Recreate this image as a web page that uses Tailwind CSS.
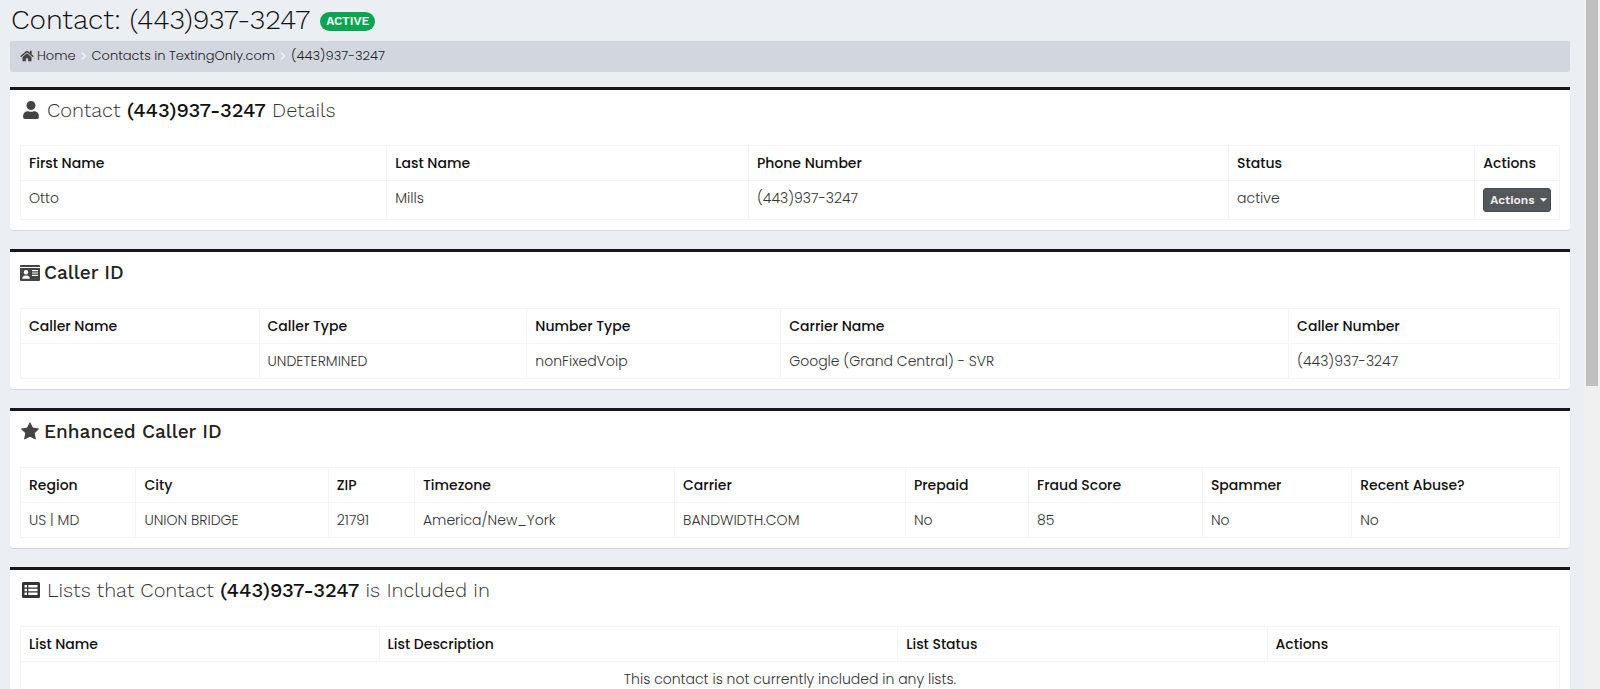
<!DOCTYPE html>
<html lang="en">
<head>
<meta charset="utf-8">
<title>Contact: (443)937-3247</title>
<script src="https://cdn.jsdelivr.net/npm/@tailwindcss/browser@4"></script>
</head>
<body class="flex h-screen overflow-hidden bg-[#ebeef3] font-['Poppins','Inter',sans-serif] text-sm leading-5 text-[#333]">
<main class="min-w-0 flex-1 pl-[10px] pr-[14px]">
  <header class="flex h-[41px] items-center gap-[10px]">
    <h1 class="pb-[2px] pl-px font-['Work_Sans','Inter',sans-serif] text-[28px] leading-8 font-light text-[#111]">Contact: (443)937-3247</h1>
    <span class="mt-[2px] rounded-full bg-[#0aa552] px-[6px] font-['Work_Sans','Inter',sans-serif] text-xs leading-[19px] font-semibold text-white">ACTIVE</span>
  </header>
  <nav aria-label="Breadcrumb" class="mb-[15px] rounded-[2px] bg-[#d2d6df] px-[10px] pt-1 pb-[6px] text-[13px] leading-[21px] font-light text-[#222]">
    <ol class="flex items-center gap-[5px]">
      <li><a href="#" class="flex items-center gap-[3px]"><svg class="h-3 w-[14px]" viewBox="0 0 576 512" fill="#444" aria-hidden="true"><path d="M280 148 96 300v164a16 16 0 0 0 16 16h112a16 16 0 0 0 16-16v-96a16 16 0 0 1 16-16h64a16 16 0 0 1 16 16v96a16 16 0 0 0 16 16h112a16 16 0 0 0 16-16V300L296 148a12 12 0 0 0-16 0zM572 251l-84-69V44a12 12 0 0 0-12-12h-56a12 12 0 0 0-12 12v73l-90-74a48 48 0 0 0-61 0L4 251a12 12 0 0 0-1 17l25 31a12 12 0 0 0 17 2l235-194a12 12 0 0 1 16 0l235 194a12 12 0 0 0 17-2l26-31a12 12 0 0 0-2-17z"/></svg>Home</a></li>
      <li aria-hidden="true"><svg class="h-2 w-[6px]" viewBox="0 0 6 8" fill="none" stroke="#f4f5f8" stroke-width="1.3"><path d="M1 .8 4.5 4 1 7.2"/></svg></li>
      <li><a href="#">Contacts in TextingOnly.com</a></li>
      <li aria-hidden="true"><svg class="h-2 w-[6px]" viewBox="0 0 6 8" fill="none" stroke="#f4f5f8" stroke-width="1.3"><path d="M1 .8 4.5 4 1 7.2"/></svg></li>
      <li>(443)937-3247</li>
    </ol>
  </nav>

  <section class="mb-[19px] rounded-b-[3px] border-t-3 border-[#15191e] bg-white px-[10px] pb-[10px] shadow-[0_1px_1px_rgba(0,0,0,0.1)]">
    <h2 class="flex h-[55px] items-start gap-2 pt-2 font-['Work_Sans','Inter',sans-serif] text-xl leading-6 font-light">
      <svg class="mt-[3px] ml-[3px] h-[18px] w-4" viewBox="0 0 448 512" fill="#444" aria-hidden="true"><path d="M224 256a128 128 0 1 0 0-256 128 128 0 0 0 0 256zm90 32h-17a174 174 0 0 1-146 0h-17A134 134 0 0 0 0 422v42a48 48 0 0 0 48 48h352a48 48 0 0 0 48-48v-42a134 134 0 0 0-134-134z"/></svg>
      <span>Contact <strong class="font-medium text-[#111]">(443)937-3247</strong> Details</span>
    </h2>
    <table class="w-full table-fixed border-collapse text-left [&_td]:border [&_td]:border-[#f4f4f4] [&_td]:px-2 [&_td]:py-[7px] [&_td]:align-top [&_td]:font-light [&_th]:border [&_th]:border-[#f4f4f4] [&_th]:px-2 [&_th]:py-[7px] [&_th]:font-medium [&_th]:text-[#111]">
      <colgroup><col class="w-[23.8%]"><col class="w-[23.5%]"><col class="w-[31.2%]"><col class="w-[16%]"><col></colgroup>
      <thead><tr><th>First Name</th><th>Last Name</th><th>Phone Number</th><th>Status</th><th>Actions</th></tr></thead>
      <tbody><tr><td>Otto</td><td>Mills</td><td>(443)937-3247</td><td>active</td>
        <td><button type="button" class="flex h-6 w-full items-center justify-between rounded-[3px] border border-[#3f4a54] bg-[#54585b] pl-[6px] pr-[3px] font-['Work_Sans','Inter',sans-serif] text-xs font-semibold text-[#eee]">Actions<svg class="h-1 w-[7px]" viewBox="0 0 8 4" fill="#fff" aria-hidden="true"><path d="M0 0h8L4 4z"/></svg></button></td></tr></tbody>
    </table>
  </section>

  <section class="mb-[19px] rounded-b-[3px] border-t-3 border-[#15191e] bg-white px-[10px] pb-[10px] shadow-[0_1px_1px_rgba(0,0,0,0.1)]">
    <h2 class="flex h-14 items-start gap-1 pt-2 font-['Work_Sans','Inter',sans-serif] text-[19px] leading-[26px] font-medium text-[#222]">
      <svg class="mt-[5px] h-4 w-5" viewBox="0 0 20 16" aria-hidden="true"><path d="M1 0h18a1 1 0 0 1 1 1v1H0V1a1 1 0 0 1 1-1zM0 3h20v12a1 1 0 0 1-1 1H1a1 1 0 0 1-1-1z" fill="#444"/><circle cx="6" cy="7.2" r="2.2" fill="#fff"/><path d="M2.2 13.8c0-2 1.3-3.3 3-3.3h1.6c1.7 0 3 1.3 3 3.3zM12 5h6v1.2h-6zM12 7.4h6v1.2h-6zM12 9.8h6V11h-6z" fill="#fff"/></svg>
      Caller ID
    </h2>
    <table class="w-full table-fixed border-collapse text-left [&_td]:border [&_td]:border-[#f4f4f4] [&_td]:px-2 [&_td]:py-[7px] [&_td]:font-light [&_th]:border [&_th]:border-[#f4f4f4] [&_th]:px-2 [&_th]:py-[7px] [&_th]:font-medium [&_th]:text-[#111]">
      <colgroup><col class="w-[15.5%]"><col class="w-[17.4%]"><col class="w-[16.5%]"><col class="w-[33%]"><col></colgroup>
      <thead><tr><th>Caller Name</th><th>Caller Type</th><th>Number Type</th><th>Carrier Name</th><th>Caller Number</th></tr></thead>
      <tbody><tr><td></td><td>UNDETERMINED</td><td>nonFixedVoip</td><td>Google (Grand Central) - SVR</td><td>(443)937-3247</td></tr></tbody>
    </table>
  </section>

  <section class="mb-[19px] rounded-b-[3px] border-t-3 border-[#15191e] bg-white px-[10px] pb-[10px] shadow-[0_1px_1px_rgba(0,0,0,0.1)]">
    <h2 class="flex h-14 items-start gap-1 pt-2 font-['Work_Sans','Inter',sans-serif] text-[19px] leading-[26px] font-medium text-[#222]">
      <svg class="mt-[3px] h-[18px] w-5" viewBox="0 0 20 18" fill="#444" stroke="#444" stroke-linejoin="round" aria-hidden="true"><path d="m10 .8 2.6 5.3 5.9.9-4.2 4.1 1 5.9-5.3-2.8L4.700 17l1-5.900L1.500 7l5.900-.9z"/></svg>
      Enhanced Caller ID
    </h2>
    <table class="w-full table-fixed border-collapse text-left [&_td]:border [&_td]:border-[#f4f4f4] [&_td]:px-2 [&_td]:py-[7px] [&_td]:font-light [&_th]:border [&_th]:border-[#f4f4f4] [&_th]:px-2 [&_th]:py-[7px] [&_th]:font-medium [&_th]:text-[#111]">
      <colgroup><col class="w-[7.5%]"><col class="w-[12.5%]"><col class="w-[5.6%]"><col class="w-[16.9%]"><col class="w-[15%]"><col class="w-[8%]"><col class="w-[11.3%]"><col class="w-[9.7%]"><col></colgroup>
      <thead><tr><th>Region</th><th>City</th><th>ZIP</th><th>Timezone</th><th>Carrier</th><th>Prepaid</th><th>Fraud Score</th><th>Spammer</th><th>Recent Abuse?</th></tr></thead>
      <tbody><tr><td>US | MD</td><td>UNION BRIDGE</td><td>21791</td><td>America/New_York</td><td>BANDWIDTH.COM</td><td>No</td><td>85</td><td>No</td><td>No</td></tr></tbody>
    </table>
  </section>

  <section class="mb-[19px] rounded-b-[3px] border-t-3 border-[#15191e] bg-white px-[10px] pb-[10px] shadow-[0_1px_1px_rgba(0,0,0,0.1)]">
    <h2 class="flex h-14 items-start gap-[7px] pt-2 font-['Work_Sans','Inter',sans-serif] text-xl leading-6 font-light">
      <svg class="mt-1 ml-[2px] h-4 w-[18px]" viewBox="0 0 18 16" aria-hidden="true"><rect width="18" height="16" rx="1.500" fill="#333"/><path d="M2.500 3h2.500v2.500H2.500zM6.300 3h9.200v2.500H6.300zM2.500 6.800h2.500v2.500H2.500zM6.300 6.800h9.200v2.500H6.300zM2.500 10.600h2.500v2.500H2.500zM6.300 10.600h9.200v2.500H6.300z" fill="#fff"/></svg>
      <span>Lists that Contact <strong class="font-medium text-[#111]">(443)937-3247</strong> is Included in</span>
    </h2>
    <table class="w-full table-fixed border-collapse text-left [&_td]:border [&_td]:border-[#f4f4f4] [&_td]:px-2 [&_td]:py-[7px] [&_td]:font-light [&_th]:border [&_th]:border-[#f4f4f4] [&_th]:px-2 [&_th]:py-[7px] [&_th]:font-medium [&_th]:text-[#111]">
      <colgroup><col class="w-[23.3%]"><col class="w-[33.7%]"><col class="w-[24%]"><col></colgroup>
      <thead><tr><th>List Name</th><th>List Description</th><th>List Status</th><th>Actions</th></tr></thead>
      <tbody><tr><td colspan="4" class="text-center">This contact is not currently included in any lists.</td></tr></tbody>
    </table>
  </section>
</main>
<div aria-hidden="true" class="w-4 shrink-0 bg-[#f0f0f0] px-[2px]"><div class="h-[56%] bg-[#c0c0c0]"></div></div>
</body>
</html>
